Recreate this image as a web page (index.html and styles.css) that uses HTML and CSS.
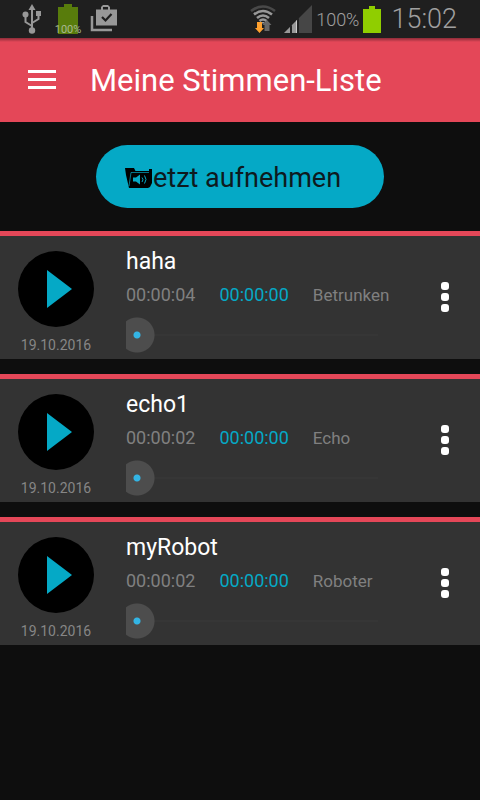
FILE: index.html
```html
<!DOCTYPE html>
<html lang="de">
<head>
<meta charset="utf-8">
<meta name="viewport" content="width=device-width, initial-scale=1">
<title>Meine Stimmen-Liste</title>
<link rel="stylesheet" href="styles.css">
</head>
<body>
<div class="status">
  <div class="status-left">
    <svg width="20" height="30" viewBox="0 0 20 30" fill="none" stroke="#989898" stroke-width="2" aria-hidden="true">
      <path d="M10 5v20M10 22L3.500 18V11M10 19l6.500-4V9"/>
      <path d="M10 0l3.500 6h-7z" fill="#989898" stroke="none"/>
      <circle cx="3.500" cy="10.500" r="3" fill="#989898" stroke="none"/>
      <circle cx="10" cy="26.500" r="3.200" fill="#989898" stroke="none"/>
      <path d="M14 7h5v5h-5z" fill="#989898" stroke="none"/>
    </svg>
    <div class="battery-note">
      <svg width="20" height="30" viewBox="0 0 20 30" aria-hidden="true"><path d="M6 0h8v3h6v27H0V3h6z" fill="#587c0c"/></svg>
      <span class="battery-label">100%</span>
    </div>
    <svg class="check" width="28" height="28" viewBox="0 0 28 28" aria-hidden="true">
      <path d="M2 11v14h20" fill="none" stroke="#989898" stroke-width="2.500"/>
      <path d="M6 4.500h5V2l2-2h5l2 2v2.500h7v16H6z" fill="#989898"/>
      <path d="M13 4.500V2h5v2.500z" fill="#1f1f1f"/>
      <path d="M12 12l3.500 3.500L21.500 9" fill="none" stroke="#1f1f1f" stroke-width="2.200"/>
    </svg>
  </div>
  <div class="status-right">
    <svg width="26" height="28" viewBox="0 0 26 28" fill="none" stroke-width="2.600" aria-hidden="true">
      <path d="M1 6Q13-3 25 6" stroke="#484848"/>
      <path d="M4 9.500Q13 2.500 22 9.500M7 13Q13 8 19 13M9.500 16Q13 13 16.500 16" stroke="#989898"/>
      <path d="M11 17h4l-2 2z" fill="#989898"/>
      <path d="M7 17h5v6h2l-4.500 5L5 23h2z" fill="#ffa12e"/>
      <path d="M14.500 26v-6h-2l4.500-5 4.500 5h-2v6z" fill="#686868"/>
    </svg>
    <svg class="signal" width="28" height="28" viewBox="0 0 28 28" aria-hidden="true">
      <path d="M28 0v28H0z" fill="#464646"/>
      <path d="M6 22v6H0zM13 15v13H7v-7z" fill="#989898"/>
      <path d="M6 21v7h2v-8zM13 14v14h2V13z" fill="#222"/>
      <path d="M12 16v12h1V15z" fill="#ccc"/>
    </svg>
    <span class="charge">100%</span>
    <svg width="18" height="27" viewBox="0 0 18 27" aria-hidden="true"><path d="M6 0h6v3h6v24H0V3h6z" fill="#90ce00"/></svg>
    <time class="clock">15:02</time>
  </div>
</div>

<header class="bar">
  <button class="menu" aria-label="Menü">
    <svg width="28" height="19" viewBox="0 0 28 19" aria-hidden="true"><path d="M0 0h28v3H0zM0 8h28v3H0zM0 16h28v3H0z" fill="#fff"/></svg>
  </button>
  <h1 class="title">Meine Stimmen-Liste</h1>
</header>

<main>
  <button class="record">
    <svg width="28" height="22" viewBox="0 0 28 22" aria-hidden="true">
      <path d="M0 1h9l1.500 3H24V2h3v14l-2 4-2 1H4L1 8z"/>
      <path d="M4 19L6 5.500h18" fill="none" stroke="#05a9c6" stroke-width=".7"/>
      <path d="M8 10.500h3l4-3v10l-4-3H8z" fill="#05a9c6"/>
      <path d="M17 10.500q2 2.200 0 4.500M19.500 8.500q3 4 0 8" fill="none" stroke="#05a9c6"/>
    </svg>
    <span>etzt aufnehmen</span>
  </button>

  <ul class="list">
    <li class="card">
      <div class="side">
        <button class="play" aria-label="haha abspielen"><svg width="25" height="38" viewBox="0 0 25 38" aria-hidden="true"><path d="M0 0l25 19L0 38z" fill="#05a9c6"/></svg></button>
        <span class="date">19.10.2016</span>
      </div>
      <div class="info">
        <h2 class="name">haha</h2>
        <div class="meta"><span>00:00:04</span><span class="pos">00:00:00</span><span class="effect">Betrunken</span></div>
        <input class="seek" type="range" min="0" max="4" value="0" aria-label="Position haha">
      </div>
      <button class="more" aria-label="Optionen haha"><span class="dot"></span><span class="dot"></span><span class="dot"></span></button>
    </li>
    <li class="card">
      <div class="side">
        <button class="play" aria-label="echo1 abspielen"><svg width="25" height="38" viewBox="0 0 25 38" aria-hidden="true"><path d="M0 0l25 19L0 38z" fill="#05a9c6"/></svg></button>
        <span class="date">19.10.2016</span>
      </div>
      <div class="info">
        <h2 class="name">echo1</h2>
        <div class="meta"><span>00:00:02</span><span class="pos">00:00:00</span><span class="effect">Echo</span></div>
        <input class="seek" type="range" min="0" max="2" value="0" aria-label="Position echo1">
      </div>
      <button class="more" aria-label="Optionen echo1"><span class="dot"></span><span class="dot"></span><span class="dot"></span></button>
    </li>
    <li class="card">
      <div class="side">
        <button class="play" aria-label="myRobot abspielen"><svg width="25" height="38" viewBox="0 0 25 38" aria-hidden="true"><path d="M0 0l25 19L0 38z" fill="#05a9c6"/></svg></button>
        <span class="date">19.10.2016</span>
      </div>
      <div class="info">
        <h2 class="name">myRobot</h2>
        <div class="meta"><span>00:00:02</span><span class="pos">00:00:00</span><span class="effect">Roboter</span></div>
        <input class="seek" type="range" min="0" max="2" value="0" aria-label="Position myRobot">
      </div>
      <button class="more" aria-label="Optionen myRobot"><span class="dot"></span><span class="dot"></span><span class="dot"></span></button>
    </li>
  </ul>
</main>
</body>
</html>
```
FILE: styles.css
```css
* { box-sizing: border-box; }
body {
  margin: 0;
  min-height: 100vh;
  background: #0e0e0e;
  color: #fff;
  font-family: Roboto, sans-serif;
}
button {
  border: 0;
  padding: 0;
  background: none;
  color: inherit;
  font-family: inherit;
  cursor: pointer;
}
svg { display: block; flex: none; }

.status {
  display: flex;
  justify-content: space-between;
  align-items: center;
  height: 38px;
  padding: 0 23px 0 22px;
  background: #1f1f1f;
  color: #a0a0a0;
  font-weight: 300;
}
.status-left { display: flex; align-items: center; gap: 12px; }
.status-right { display: flex; align-items: center; gap: 4px; }
.battery-note { position: relative; padding: 0 4px; }
.battery-label {
  position: absolute;
  left: 50%;
  bottom: 0;
  transform: translateX(-50%);
  font-size: 11px;
  font-weight: 400;
  line-height: 9px;
  color: #a8b890;
}
.check { margin-left: -4px; }
.signal { margin-left: 4px; }
.charge { font-size: 18px; }
.clock { margin-left: 6px; font-size: 27px; }

.bar {
  display: flex;
  align-items: center;
  gap: 34px;
  height: 84px;
  padding: 0 28px 2px;
  background: #e44758 linear-gradient(#8c2c38, #e44758) top / 100% 4px no-repeat;
}
.title { margin: 0; padding-top: 4px; font-size: 31px; font-weight: 400; line-height: 36px; }

.record {
  display: flex;
  align-items: center;
  width: 60%;
  height: 63px;
  margin: 23px auto;
  padding: 2px 0 0 29px;
  border-radius: 32px;
  background: #05a9c6;
  color: #0e1a1e;
  font-size: 27px;
}

.list {
  display: flex;
  flex-direction: column;
  gap: 15px;
  margin: 0;
  padding: 0;
  list-style: none;
}
.card {
  display: flex;
  height: 128px;
  border-top: 5px solid #e44758;
  background: #333;
}
.side {
  display: flex;
  flex-direction: column;
  align-items: center;
  gap: 9px;
  width: 112px;
  padding-top: 15px;
}
.play {
  display: flex;
  align-items: center;
  justify-content: center;
  width: 76px;
  height: 76px;
  padding-left: 6px;
  border-radius: 50%;
  background: #000;
}
.date { color: #868686; font-size: 14px; line-height: 18px; }
.info {
  flex: 1;
  display: flex;
  flex-direction: column;
  min-width: 0;
  padding: 11px 0 0 14px;
}
.name { margin: 0; font-size: 23px; font-weight: 400; line-height: 30px; }
.meta {
  display: flex;
  gap: 24px;
  margin-top: 6px;
  color: #808080;
  font-size: 18px;
  line-height: 24px;
}
.pos { color: #05a9c6; }
.effect { font-size: 17px; }
.seek {
  appearance: none;
  width: 100%;
  height: 36px;
  margin: 10px 0 0;
  background: linear-gradient(#363636, #363636) center / 100% 2px no-repeat;
}
.seek::-webkit-slider-thumb {
  appearance: none;
  width: 29px;
  height: 36px;
  background: radial-gradient(circle at 11px 18px, #33b5e5 3px, #4d4d4d 4px, #4d4d4d 17px, transparent 18px);
}
.more {
  display: flex;
  flex-direction: column;
  align-items: center;
  justify-content: center;
  gap: 3px;
  width: 70px;
  margin-left: 32px;
  padding-bottom: 2px;
}
.dot {
  width: 8px;
  height: 8px;
  border-radius: 3px;
  background: #fff;
}
```
